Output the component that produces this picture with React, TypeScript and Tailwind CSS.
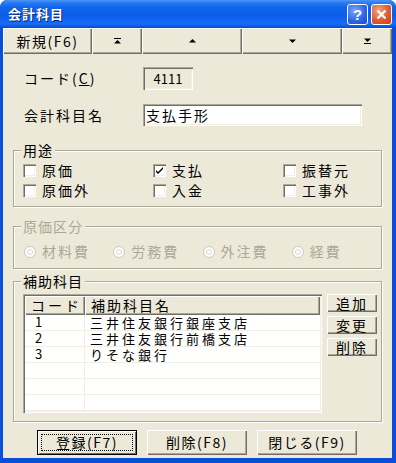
import React from "react";

const jp = "font-['MS_UI_Gothic','Noto_Sans_CJK_JP',sans-serif]";
const raised =
  "bg-[#ece9d8] shadow-[inset_1px_1px_0_#fff,inset_-1px_-1px_0_#716f64,inset_-2px_-2px_0_#aca899]";
const sunken =
  "shadow-[inset_1px_1px_0_#aca899,inset_2px_2px_0_#716f64,inset_-1px_-1px_0_#fff,inset_-2px_-2px_0_#f1efe2]";

const uses = [
  { label: "原価", checked: false },
  { label: "支払", checked: true },
  { label: "振替元", checked: false },
  { label: "原価外", checked: false },
  { label: "入金", checked: false },
  { label: "工事外", checked: false },
];

const costKinds = ["材料費", "労務費", "外注費", "経費"];

const subAccounts = [
  { code: "1", name: "三井住友銀行銀座支店" },
  { code: "2", name: "三井住友銀行前橋支店" },
  { code: "3", name: "りそな銀行" },
  { code: "", name: "" },
  { code: "", name: "" },
  { code: "", name: "" },
];

function Arrow({ kind }: { kind: "first" | "up" | "down" | "last" }) {
  return (
    <svg width="9" height="6" viewBox="0 0 9 6" className="fill-black">
      {kind === "first" && (
        <>
          <rect x="1" y="0" width="7" height="1" />
          <path d="M4.5 2 L8 5.5 L1 5.5 Z" />
        </>
      )}
      {kind === "up" && <path d="M4.5 1 L8 4.5 L1 4.5 Z" />}
      {kind === "down" && <path d="M1 1.5 L8 1.5 L4.5 5 Z" />}
      {kind === "last" && (
        <>
          <path d="M1 0.5 L8 0.5 L4.5 4 Z" />
          <rect x="1" y="5" width="7" height="1" />
        </>
      )}
    </svg>
  );
}

function CheckBox({ checked }: { checked: boolean }) {
  return (
    <span className={`flex h-[13px] w-[13px] shrink-0 items-center justify-center bg-white ${sunken}`}>
      {checked && (
        <svg width="7" height="7" viewBox="0 0 7 7">
          <path d="M0 3 L0 5 L2 7 L7 2 L7 0 L2 5 Z" fill="#000" />
        </svg>
      )}
    </span>
  );
}

function Group({ title, disabled, className, children }: { title: string; disabled?: boolean; className: string; children: React.ReactNode }) {
  return (
    <div
      className={`relative mx-[10px] border border-[#aca899] shadow-[inset_1px_1px_0_#fff,1px_1px_0_#fff] ${className}`}
    >
      <span
        className={`absolute -top-[10px] left-[7px] bg-[#ece9d8] px-[2px] text-[14px] leading-[18px] tracking-[1px] ${
          disabled ? "text-[#aca899]" : "text-black"
        }`}
      >
        {title}
      </span>
      {children}
    </div>
  );
}

export default function App() {
  return (
    <div className={`h-[463px] w-[396px] overflow-hidden ${jp} rounded-t-[7px] bg-[#0a4fd8]`}>
      {/* title bar */}
      <div className="flex h-[28px] items-center rounded-t-[7px] bg-[linear-gradient(to_bottom,#4a95f7_0%,#2a7cf2_10%,#1266ea_25%,#0a5ee9_55%,#0f64f3_70%,#1a6cf6_85%,#0a58dc_95%,#0648be_100%)] pl-[8px] pr-[4px]">
        <span className="flex-1 text-[13px] font-bold tracking-[1px] text-white [text-shadow:1px_1px_0_#0a1e6e]">
          会計科目
        </span>
        <div className="flex gap-[3px]">
          <div className="flex h-[21px] w-[21px] items-center justify-center rounded-[3px] border border-white bg-[radial-gradient(circle_at_35%_30%,#7aa6ff,#2a63e8_60%,#1b48c8)] text-[15px] font-bold leading-none text-white font-['Liberation_Sans',sans-serif]">
            ?
          </div>
          <div className="flex h-[21px] w-[21px] items-center justify-center rounded-[3px] border border-white bg-[radial-gradient(circle_at_35%_30%,#f2a58a,#e05a2e_55%,#c4401a)]">
            <svg width="11" height="11" viewBox="0 0 11 11">
              <path d="M1.5 1.5 L9.5 9.5 M9.5 1.5 L1.5 9.5" stroke="#fff" strokeWidth="2.2" />
            </svg>
          </div>
        </div>
      </div>

      {/* client area */}
      <div className="ml-[3px] mr-[4px] flex h-[430px] flex-col bg-[#ece9d8] text-[14px] text-black">
        {/* toolbar */}
        <div className="flex h-[26px]">
          <button className={`flex w-[89px] items-center justify-center ${raised} tracking-[1.5px]`}>新規(F6)</button>
          <button className={`flex w-[50px] items-center justify-center ${raised}`}><Arrow kind="first" /></button>
          <button className={`flex w-[100px] items-center justify-center ${raised}`}><Arrow kind="up" /></button>
          <button className={`flex w-[100px] items-center justify-center ${raised}`}><Arrow kind="down" /></button>
          <button className={`flex w-[50px] items-center justify-center ${raised}`}><Arrow kind="last" /></button>
        </div>

        {/* code */}
        <div className="mt-[13px] flex h-[23px] items-center pl-[21px]">
          <span className="w-[119px] tracking-[2px]">
            コード(<span className="underline">C</span>)
          </span>
          <div className={`flex h-[23px] w-[50px] items-center justify-center ${sunken} text-[13px]`}>4111</div>
        </div>

        {/* name */}
        <div className="mt-[14px] flex h-[22px] items-center pl-[21px]">
          <span className="w-[119px] tracking-[2px]">会計科目名</span>
          <div className={`flex h-[22px] w-[219px] items-center bg-white pl-[3px] tracking-[2px] ${sunken}`}>支払手形</div>
        </div>

        {/* uses */}
        <Group title="用途" className="mt-[24px] h-[57px] pl-[9px] pt-[13px]">
          <div className="grid grid-cols-[130px_130px_100px] gap-y-[7px]">
            {uses.map((u) => (
              <label key={u.label} className="flex h-[13px] items-center gap-[6px] tracking-[2px]">
                <CheckBox checked={u.checked} />
                {u.label}
              </label>
            ))}
          </div>
        </Group>

        {/* cost kinds */}
        <Group title="原価区分" disabled className="mt-[19px] h-[43px] pl-[10px] pt-[14px]">
          <div className="flex">
            {costKinds.map((k) => (
              <label key={k} className="flex w-[90px] items-center gap-[6px] tracking-[2px] text-[#aca899]">
                <svg width="12" height="12" viewBox="0 0 12 12">
                  <circle cx="6" cy="6" r="5.5" fill="#fff" stroke="#cac8bb" />
                  <circle cx="6" cy="6" r="2.5" fill="#fff" stroke="#d8d6c8" />
                </svg>
                {k}
              </label>
            ))}
          </div>
        </Group>

        {/* sub accounts */}
        <Group title="補助科目" className="mt-[12px] flex h-[141px] gap-[5px] pl-[9px] pt-[12px]">
          <div className={`flex h-[119px] w-[299px] flex-col overflow-hidden bg-white p-[2px] ${sunken}`}>
            <div className="flex h-[19px] shrink-0">
              <div className={`flex w-[60px] items-center whitespace-nowrap pl-[6px] tracking-[3px] ${raised}`}>コード</div>
              <div className={`flex flex-1 items-center pl-[6px] tracking-[2px] ${raised}`}>補助科目名</div>
            </div>
            {subAccounts.map((s, i) => (
              <div key={i} className="flex h-[16px] shrink-0 items-center border-b border-[#f1efe2] text-[13px] leading-[14px]">
                <div className="h-full w-[60px] border-r border-[#f1efe2] pl-[10px]">{s.code}</div>
                <div className="flex-1 whitespace-nowrap pl-[5px] tracking-[3px]">{s.name}</div>
              </div>
            ))}
          </div>
          <div className="flex flex-col gap-[4px]">
            {["追加", "変更", "削除"].map((b) => (
              <button key={b} className={`h-[18px] w-[50px] leading-[16px] tracking-[2px] ${raised}`}>
                {b}
              </button>
            ))}
          </div>
        </Group>

        {/* bottom buttons */}
        <div className="mt-[8px] flex gap-[10px] pl-[34px]">
          <button className="h-[25px] w-[100px] border border-black bg-[#ece9d8] p-0">
            <div className="flex h-full w-full items-center justify-center p-[3px] shadow-[inset_1px_1px_0_#fff,inset_-1px_-1px_0_#716f64]">
              <div className="flex h-full w-full items-center justify-center border border-dotted border-black tracking-[1.5px]">
                登録(F7)
              </div>
            </div>
          </button>
          <button className={`h-[25px] w-[100px] tracking-[1.5px] ${raised}`}>削除(F8)</button>
          <button className={`h-[25px] w-[100px] tracking-[1.5px] ${raised}`}>閉じる(F9)</button>
        </div>
      </div>
    </div>
  );
}
